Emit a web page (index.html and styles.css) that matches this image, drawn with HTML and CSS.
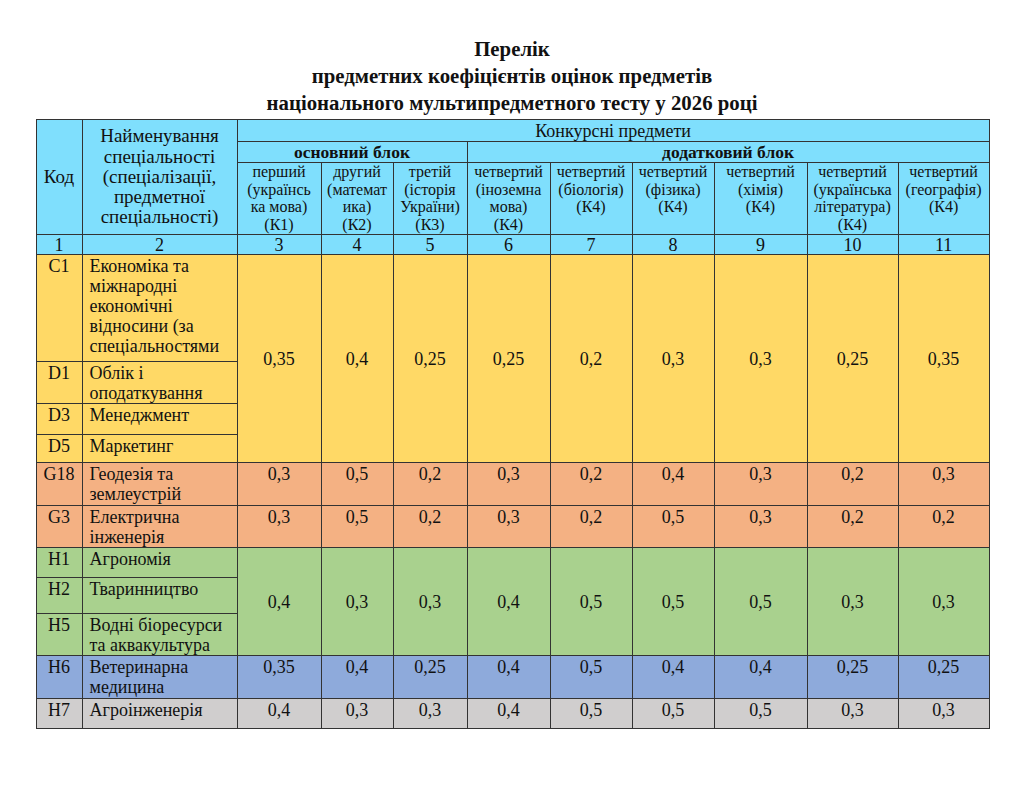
FILE: index.html
```html
<!DOCTYPE html>
<html>
<head>
    <meta charset="utf-8">
    <link rel="stylesheet" href="styles.css">
</head>
<body>
    <div class="page">
        <h1 class="title">Перелік<br>предметних коефіцієнтів оцінок предметів<br>національного мультипредметного тесту у 2026 році</h1>

        <table class="coef-table">
            <colgroup>
                <col style="width: 46px">
                <col style="width: 155px">
                <col style="width: 84px">
                <col style="width: 72px">
                <col style="width: 74px">
                <col style="width: 83px">
                <col style="width: 82px">
                <col style="width: 82px">
                <col style="width: 93px">
                <col style="width: 91px">
                <col style="width: 91px">
            </colgroup>
            <thead>
                <tr class="head-row1">
                    <th rowspan="3" class="head-side">Код</th>
                    <th rowspan="3" class="head-side">Найменування<br>спеціальності<br>(спеціалізації,<br>предметної<br>спеціальності)</th>
                    <th colspan="9" class="head-big">Конкурсні предмети</th>
                </tr>
                <tr class="head-row2">
                    <th colspan="3" class="head-block">основний блок</th>
                    <th colspan="6" class="head-block">додатковий блок</th>
                </tr>
                <tr class="head-row3">
                    <th class="subject">перший<br>(українсь<br>ка мова)<br>(К1)</th>
                    <th class="subject">другий<br>(математ<br>ика)<br>(К2)</th>
                    <th class="subject">третій<br>(історія<br>України)<br>(К3)</th>
                    <th class="subject">четвертий<br>(іноземна<br>мова)<br>(К4)</th>
                    <th class="subject">четвертий<br>(біологія)<br>(К4)</th>
                    <th class="subject">четвертий<br>(фізика)<br>(К4)</th>
                    <th class="subject">четвертий<br>(хімія)<br>(К4)</th>
                    <th class="subject">четвертий<br>(українська<br>література)<br>(К4)</th>
                    <th class="subject">четвертий<br>(географія)<br>(К4)</th>
                </tr>
                <tr class="num-row">
                    <th>1</th><th>2</th><th>3</th><th>4</th><th>5</th><th>6</th>
                    <th>7</th><th>8</th><th>9</th><th>10</th><th>11</th>
                </tr>
            </thead>
            <tbody>
                <!-- економіка -->
                <tr class="yellow" style="height: 107px">
                    <td class="code">C1</td>
                    <td class="name">Економіка та<br>міжнародні<br>економічні<br>відносини (за<br>спеціальностями</td>
                    <td rowspan="4" class="val mid">0,35</td>
                    <td rowspan="4" class="val mid">0,4</td>
                    <td rowspan="4" class="val mid">0,25</td>
                    <td rowspan="4" class="val mid">0,25</td>
                    <td rowspan="4" class="val mid">0,2</td>
                    <td rowspan="4" class="val mid">0,3</td>
                    <td rowspan="4" class="val mid">0,3</td>
                    <td rowspan="4" class="val mid">0,25</td>
                    <td rowspan="4" class="val mid">0,35</td>
                </tr>
                <tr class="yellow" style="height: 42px">
                    <td class="code">D1</td>
                    <td class="name">Облік і<br>оподаткування</td>
                </tr>
                <tr class="yellow" style="height: 31px">
                    <td class="code">D3</td>
                    <td class="name">Менеджмент</td>
                </tr>
                <tr class="yellow" style="height: 28px">
                    <td class="code">D5</td>
                    <td class="name">Маркетинг</td>
                </tr>

                <!-- геодезія, електрика -->
                <tr class="orange" style="height: 43px">
                    <td class="code">G18</td>
                    <td class="name">Геодезія та<br>землеустрій</td>
                    <td class="val">0,3</td><td class="val">0,5</td><td class="val">0,2</td>
                    <td class="val">0,3</td><td class="val">0,2</td><td class="val">0,4</td>
                    <td class="val">0,3</td><td class="val">0,2</td><td class="val">0,3</td>
                </tr>
                <tr class="orange" style="height: 42px">
                    <td class="code">G3</td>
                    <td class="name">Електрична<br>інженерія</td>
                    <td class="val">0,3</td><td class="val">0,5</td><td class="val">0,2</td>
                    <td class="val">0,3</td><td class="val">0,2</td><td class="val">0,5</td>
                    <td class="val">0,3</td><td class="val">0,2</td><td class="val">0,2</td>
                </tr>

                <!-- аграрні -->
                <tr class="green" style="height: 30px">
                    <td class="code">H1</td>
                    <td class="name">Агрономія</td>
                    <td rowspan="3" class="val mid">0,4</td>
                    <td rowspan="3" class="val mid">0,3</td>
                    <td rowspan="3" class="val mid">0,3</td>
                    <td rowspan="3" class="val mid">0,4</td>
                    <td rowspan="3" class="val mid">0,5</td>
                    <td rowspan="3" class="val mid">0,5</td>
                    <td rowspan="3" class="val mid">0,5</td>
                    <td rowspan="3" class="val mid">0,3</td>
                    <td rowspan="3" class="val mid">0,3</td>
                </tr>
                <tr class="green" style="height: 36px">
                    <td class="code">H2</td>
                    <td class="name">Тваринництво</td>
                </tr>
                <tr class="green" style="height: 41px">
                    <td class="code">H5</td>
                    <td class="name">Водні біоресурси<br>та аквакультура</td>
                </tr>

                <tr class="blue" style="height: 43px">
                    <td class="code">H6</td>
                    <td class="name">Ветеринарна<br>медицина</td>
                    <td class="val">0,35</td><td class="val">0,4</td><td class="val">0,25</td>
                    <td class="val">0,4</td><td class="val">0,5</td><td class="val">0,4</td>
                    <td class="val">0,4</td><td class="val">0,25</td><td class="val">0,25</td>
                </tr>
                <tr class="gray" style="height: 30px">
                    <td class="code">H7</td>
                    <td class="name">Агроінженерія</td>
                    <td class="val">0,4</td><td class="val">0,3</td><td class="val">0,3</td>
                    <td class="val">0,4</td><td class="val">0,5</td><td class="val">0,5</td>
                    <td class="val">0,5</td><td class="val">0,3</td><td class="val">0,3</td>
                </tr>
            </tbody>
        </table>
    </div>
</body>
</html>
```

FILE: styles.css
```css
body {
    margin: 0;
    background: #ffffff;
    color: #111111;
    font-family: "Liberation Serif", "Times New Roman", serif;
}

.page {
    width: 953px;
    margin: 0 auto;
    padding-top: 35px;
}

.title {
    margin: 0 0 3px 0;
    text-align: center;
    font-size: 20.8px;
    line-height: 27px;
    font-weight: bold;
}

.coef-table {
    width: 953px;
    table-layout: fixed;
    border-collapse: collapse;
    border: 1px solid #333333;
}

.coef-table th,
.coef-table td {
    border: 1px solid #333333;
    padding: 0;
}

.coef-table thead th {
    background: #7fdffd;
    font-weight: normal;
    text-align: center;
    vertical-align: middle;
}

.head-big {
    font-size: 18px;
    line-height: 20px;
}

.head-side {
    font-size: 19px;
    line-height: 20.3px;
}

.head-row1 {
    height: 22px;
}

.head-row2 {
    height: 21px;
}

.head-row3 {
    height: 72px;
}

.coef-table thead th.head-block {
    font-weight: bold;
    font-size: 17.5px;
    line-height: 19px;
}

.coef-table thead th.subject {
    font-size: 16px;
    line-height: 17.5px;
    vertical-align: top;
}

.num-row {
    height: 20px;
}

.num-row th {
    font-size: 18px;
    line-height: 18px;
}

.coef-table td {
    font-size: 18px;
    line-height: 20px;
    vertical-align: top;
    padding-top: 1px;
}

.code {
    text-align: center;
}

.name {
    text-align: left;
    padding-left: 7px !important;
}

.val {
    text-align: center;
}

.coef-table td.mid {
    vertical-align: middle;
    padding-top: 0;
}

.yellow td {
    background: #ffd966;
}

.orange td {
    background: #f4b183;
}

.green td {
    background: #a9d18e;
}

.blue td {
    background: #8eaadb;
}

.gray td {
    background: #d0cece;
}
```
